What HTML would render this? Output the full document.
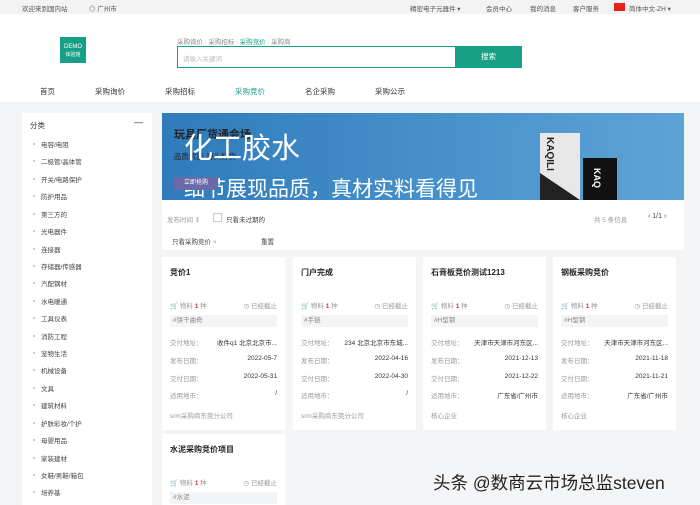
<!DOCTYPE html>
<html><head><meta charset="utf-8">
<style>
*{margin:0;padding:0;box-sizing:border-box}
body{width:700px;height:505px;overflow:hidden;background:#f4f5f7;font-family:"Liberation Sans","Noto Sans CJK SC",sans-serif;font-size:7px;color:#333;position:relative}
.a{position:absolute;white-space:nowrap}
.g{color:#999}
.card{position:absolute;background:#fff;width:123px}
.card .t{position:absolute;left:8px;top:10px;font-size:8px;font-weight:bold;color:#222}
.card .r{position:absolute;left:8px;right:8px;font-size:6.5px;color:#999;height:10px}
.card .r span{position:absolute;right:0;top:0;color:#333}
.tag{position:absolute;left:8px;right:8px;height:12px;background:#f3f4f6;color:#888;font-size:6.5px;padding-left:3px;line-height:12px}
.side div{position:absolute;left:19px;font-size:6.5px;color:#444}
.side div:before{content:"";position:absolute;left:-8px;top:4px;width:2px;height:2px;background:#bbb;border-radius:1px}
</style></head><body>
<div class="a" style="left:0;top:0;width:700px;height:14px;background:#f3f3f3"></div>
<div class="a" style="left:22px;top:3px;font-size:6.5px;color:#555">欢迎来到国内站</div>
<div class="a" style="left:89px;top:3px;font-size:6.5px;color:#555">◎ 广州市</div>
<div class="a" style="left:410px;top:3px;font-size:6.5px;color:#555">精密电子元器件 ▾</div>
<div class="a" style="left:486px;top:3px;font-size:6.5px;color:#555">会员中心</div>
<div class="a" style="left:530px;top:3px;font-size:6.5px;color:#555">我的消息</div>
<div class="a" style="left:573px;top:3px;font-size:6.5px;color:#555">客户服务</div>
<div class="a" style="left:614px;top:3px;width:11px;height:8px;background:#e5231b"></div>
<div class="a" style="left:629px;top:3px;font-size:6.5px;color:#555">简体中文-ZH ▾</div>
<div class="a" style="left:0;top:14px;width:700px;height:88px;background:#fff"></div>
<div class="a" style="left:60px;top:37px;width:26px;height:26px;background:#17a085;color:#fff;font-size:6px;text-align:center;line-height:8px;padding-top:6px">DEMO<br><span style="font-size:5px">体验馆</span></div>
<div class="a" style="left:177px;top:36px;font-size:6.5px;color:#888">采购询价 <span style="color:#ddd">|</span> 采购招标 <span style="color:#ddd">|</span> <span style="color:#17a085">采购竞价</span> <span style="color:#ddd">|</span> 采购商</div>
<div class="a" style="left:177px;top:46px;width:279px;height:22px;border:1.5px solid #17a085;background:#fff"></div>
<div class="a" style="left:183px;top:53px;font-size:6.5px;color:#bbb">请输入关键词</div>
<div class="a" style="left:455px;top:46px;width:67px;height:22px;background:#17a085;color:#fff;font-size:7.5px;text-align:center;line-height:22px">搜索</div>
<div class="a" style="left:40px;top:86px;font-size:7.5px;color:#333">首页</div>
<div class="a" style="left:95px;top:86px;font-size:7.5px;color:#333">采购询价</div>
<div class="a" style="left:165px;top:86px;font-size:7.5px;color:#333">采购招标</div>
<div class="a" style="left:235px;top:86px;font-size:7.5px;color:#17a085">采购竞价</div>
<div class="a" style="left:305px;top:86px;font-size:7.5px;color:#333">名企采购</div>
<div class="a" style="left:375px;top:86px;font-size:7.5px;color:#333">采购公示</div>
<div class="a side" style="left:22px;top:113px;width:130px;height:392px;background:#fff">
<span class="a" style="left:8px;top:7px;font-size:7.5px">分类</span>
<span class="a" style="left:112px;top:4px;font-size:9px">—</span>
<div style="top:26px">电容/电阻</div><div style="top:43px">二极管/晶体管</div><div style="top:61px">开关/电路保护</div><div style="top:78px">防护用品</div><div style="top:96px">第三方的</div><div style="top:113px">光电器件</div><div style="top:131px">连接器</div><div style="top:148px">存储器/传感器</div><div style="top:165px">汽配钢材</div><div style="top:183px">水电暖通</div><div style="top:200px">工具仪表</div><div style="top:218px">消防工程</div><div style="top:235px">宠物生活</div><div style="top:252px">机械设备</div><div style="top:270px">文具</div><div style="top:287px">建筑材料</div><div style="top:305px">护肤彩妆/个护</div><div style="top:322px">母婴用品</div><div style="top:340px">家装建材</div><div style="top:357px">女鞋/男鞋/箱包</div><div style="top:374px">培养基</div>
</div>
<div class="a" style="left:162px;top:113px;width:522px;height:87px;background:linear-gradient(90deg,#2f7bbb,#4a94cd 60%,#5ea3d6);overflow:hidden">
<div class="a" style="left:12px;top:13px;font-size:11px;font-weight:bold;color:#222">玩具厂货通会场</div>
<div class="a" style="left:12px;top:38px;font-size:7.5px;color:#222">品质优选 源头好货</div>
<div class="a" style="left:22px;top:12px;font-size:29px;color:#fff">化工胶水</div>
<div class="a" style="left:22px;top:60px;font-size:21px;color:#fff">细节展现品质，真材实料看得见</div>
<div class="a" style="left:12px;top:64px;width:44px;height:13px;background:#6a6aa8;color:#fff;font-size:6px;text-align:center;line-height:13px">立即抢购</div>
<div class="a" style="left:378px;top:20px;width:40px;height:67px;background:#e8e8e8"></div>
<div class="a" style="left:378px;top:60px;width:0;height:0;border-left:40px solid #222;border-top:27px solid transparent"></div>
<div class="a" style="left:382px;top:24px;font-size:10px;font-weight:bold;color:#222;writing-mode:vertical-rl">KAQILI</div>
<div class="a" style="left:421px;top:45px;width:34px;height:42px;background:#111"></div>
<div class="a" style="left:430px;top:55px;font-size:9px;font-weight:bold;color:#fff;writing-mode:vertical-rl">KAQ</div>
</div>
<div class="a" style="left:162px;top:200px;width:522px;height:50px;background:#fff"></div>
<div class="a g" style="left:167px;top:214px;font-size:6.5px">发布时间 ⇕</div>
<div class="a" style="left:213px;top:213px;width:9px;height:9px;border:1px solid #ccc"></div>
<div class="a" style="left:226px;top:214px;font-size:6.5px;color:#444">只看未过期的</div>
<div class="a g" style="left:594px;top:214px;font-size:6.5px">共 5 条信息</div>
<div class="a" style="left:648px;top:213px;font-size:7px;color:#444">‹ 1/1 ›</div>
<div class="a" style="left:172px;top:236px;font-size:6.5px;color:#444">只看采购竞价 <span class="g">×</span></div>
<div class="a" style="left:261px;top:236px;font-size:6.5px;color:#444">重置</div>
<div class="card" style="left:162px;top:257px;height:173px"><div class="t">竞价1</div>
<div class="r" style="top:43px">🛒 物料 <b style="color:#d33">1</b> 种<span style="color:#999">◷ 已经截止</span></div>
<div class="tag" style="top:58px">#饼干曲奇</div>
<div class="r" style="top:80px">交付地址：<span>收件q1 北京北京市...</span></div>
<div class="r" style="top:98px">发布日期：<span>2022-05-7</span></div>
<div class="r" style="top:116px">交付日期：<span>2022-05-31</span></div>
<div class="r" style="top:133px">适用地市：<span>/</span></div>
<div class="r" style="top:153px">srm采购商东莞分公司</div></div>
<div class="card" style="left:293px;top:257px;height:173px"><div class="t">门户完成</div>
<div class="r" style="top:43px">🛒 物料 <b style="color:#d33">1</b> 种<span style="color:#999">◷ 已经截止</span></div>
<div class="tag" style="top:58px">#手链</div>
<div class="r" style="top:80px">交付地址：<span>234 北京北京市东城...</span></div>
<div class="r" style="top:98px">发布日期：<span>2022-04-16</span></div>
<div class="r" style="top:116px">交付日期：<span>2022-04-30</span></div>
<div class="r" style="top:133px">适用地市：<span>/</span></div>
<div class="r" style="top:153px">srm采购商东莞分公司</div></div>
<div class="card" style="left:423px;top:257px;height:173px"><div class="t">石膏板竞价测试1213</div>
<div class="r" style="top:43px">🛒 物料 <b style="color:#d33">1</b> 种<span style="color:#999">◷ 已经截止</span></div>
<div class="tag" style="top:58px">#H型钢</div>
<div class="r" style="top:80px">交付地址：<span>天津市天津市河东区...</span></div>
<div class="r" style="top:98px">发布日期：<span>2021-12-13</span></div>
<div class="r" style="top:116px">交付日期：<span>2021-12-22</span></div>
<div class="r" style="top:133px">适用地市：<span>广东省/广州市</span></div>
<div class="r" style="top:153px">核心企业</div></div>
<div class="card" style="left:553px;top:257px;height:173px"><div class="t">钢板采购竞价</div>
<div class="r" style="top:43px">🛒 物料 <b style="color:#d33">1</b> 种<span style="color:#999">◷ 已经截止</span></div>
<div class="tag" style="top:58px">#H型钢</div>
<div class="r" style="top:80px">交付地址：<span>天津市天津市河东区...</span></div>
<div class="r" style="top:98px">发布日期：<span>2021-11-18</span></div>
<div class="r" style="top:116px">交付日期：<span>2021-11-21</span></div>
<div class="r" style="top:133px">适用地市：<span>广东省/广州市</span></div>
<div class="r" style="top:153px">核心企业</div></div>
<div class="card" style="left:162px;top:434px;height:71px"><div class="t">水泥采购竞价项目</div>
<div class="r" style="top:43px">🛒 物料 <b style="color:#d33">1</b> 种<span style="color:#999">◷ 已经截止</span></div>
<div class="tag" style="top:58px">#水泥</div></div>
<div class="a" style="left:433px;top:470px;font-size:17.5px;color:#222">头条 @数商云市场总监steven</div>
</body></html>
